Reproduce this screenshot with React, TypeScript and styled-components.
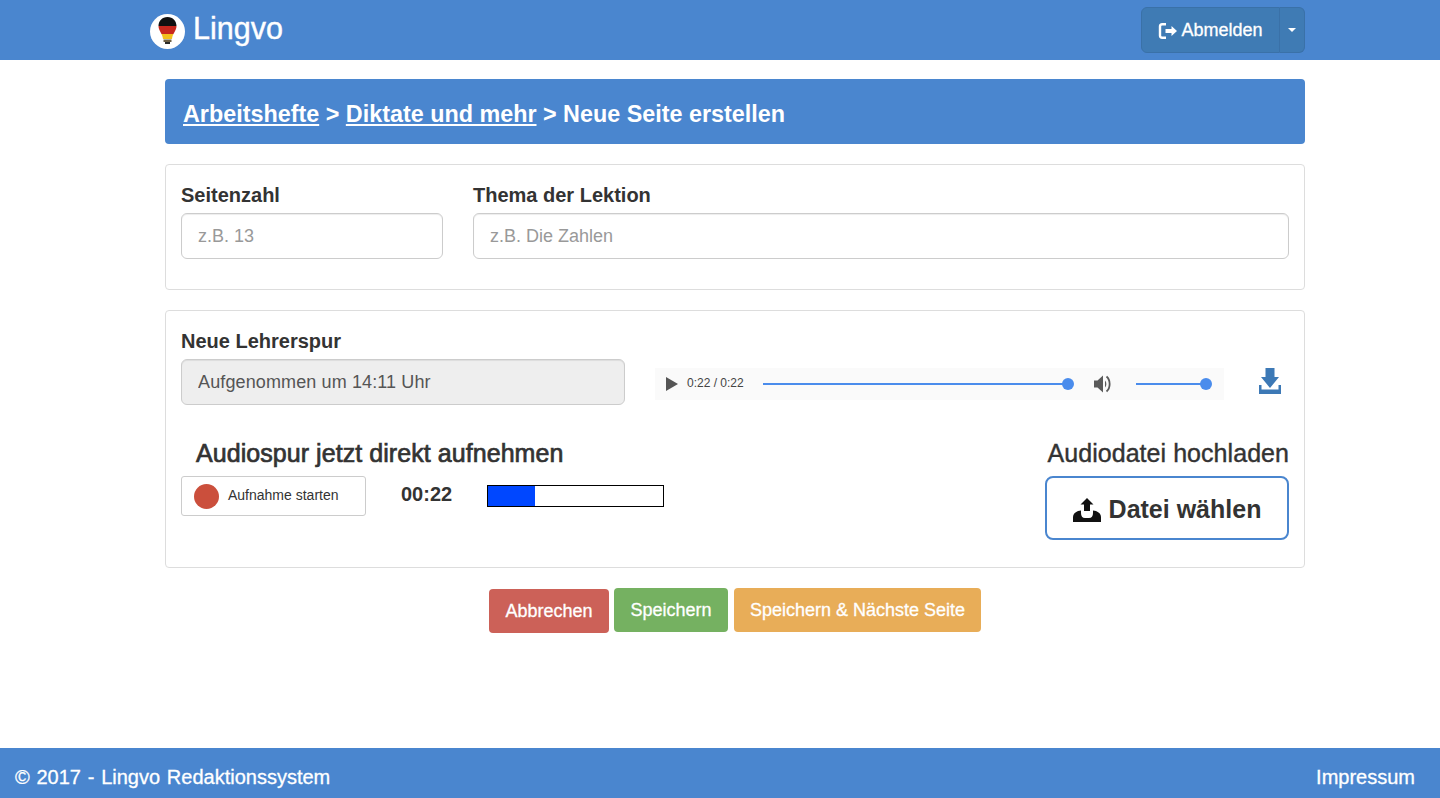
import styled, { createGlobalStyle } from "styled-components";

const BLUE = "#4a86cf";

const GlobalStyle = createGlobalStyle`
  * { box-sizing: border-box; }
  html, body { margin: 0; padding: 0; }
  body {
    font-family: "Liberation Sans", Arial, sans-serif;
    font-size: 18px;
    line-height: 1.42857;
    color: #333;
    background: #fff;
  }
`;

function SignOutIcon() {
  return (
    <svg width="20" height="18" viewBox="0 0 20 18" fill="#fff">
      <path d="M8 1H4.200C2 1 .8 2.300 .8 4.200v9.600C.8 15.700 2 17 4.200 17H8v-2.400H4.400c-.8 0-1.200-.5-1.200-1.200V4.600c0-.7.4-1.200 1.200-1.200H8z" />
      <path d="M13.500 4 19 9l-5.500 5v-3H7.500V7h6z" />
    </svg>
  );
}

function BulbLogo() {
  return (
    <svg width="35" height="35" viewBox="0 0 35 35">
      <defs>
        <linearGradient id="flag" x1="0" y1="0" x2="0" y2="1">
          <stop offset="0.41" stopColor="#111" />
          <stop offset="0.41" stopColor="#c8281e" />
          <stop offset="0.77" stopColor="#c8281e" />
          <stop offset="0.77" stopColor="#f2c01e" />
        </linearGradient>
      </defs>
      <circle cx="17.5" cy="17.5" r="17.5" fill="#fff" />
      <path
        d="M17.500 3C12 3 8.500 7 8.500 12c0 4.500 4 7.500 4.500 13h9c.5-5.500 4.500-8.500 4.500-13 0-5-3.500-9-9-9z"
        fill="url(#flag)"
      />
      <path d="M13.500 25.500h8V28h-8z" fill="#6d5f44" />
      <path d="M15 28h5v2h-5z" fill="#2a2a2a" />
    </svg>
  );
}

function DownloadIcon() {
  return (
    <svg width="24" height="26" viewBox="0 0 24 26" fill="#3d79b6">
      <path d="M7.500 0h9v9h4.500L12 20 3 9h4.500z" />
      <path d="M1 17h2.500v4.500h17V17H23v9H1z" />
    </svg>
  );
}

function UploadIcon() {
  return (
    <svg width="28" height="24" viewBox="0 0 28 24" fill="#111">
      <path d="M14 0l6.500 6.500H17V13h-6V6.500H7.500z" />
      <path d="M0 19q0-4 5-6l3-.5V15q0 5 4 5h4q4 0 4-5v-2.500l3 .5q5 2 5 6v5H0z" />
    </svg>
  );
}

function SpeakerIcon() {
  return (
    <svg width="20" height="20" viewBox="0 0 20 20" fill="#5a5a5a">
      <path d="M2 6.500h3.500L11 1.500v17l-5.500-5H2z" />
      <path d="M13 6.500c1.800 1.800 1.800 5.200 0 7z" />
      <path
        d="M14.500 2.500c4.200 3.500 4.200 11.500 0 15"
        fill="none"
        stroke="#5a5a5a"
        strokeWidth="1.800"
      />
    </svg>
  );
}

export default function App() {
  return (
    <Page>
      <GlobalStyle />
      <Navbar>
        <Brand>
          <BulbLogo />
          <BrandName>Lingvo</BrandName>
        </Brand>
        <SplitButton>
          <LogoutButton>
            <SignOutIcon />
            Abmelden
          </LogoutButton>
          <CaretButton>
            <Caret />
          </CaretButton>
        </SplitButton>
      </Navbar>

      <Main>
        <Breadcrumb>
          <CrumbLink href="#">Arbeitshefte</CrumbLink> &gt;{" "}
          <CrumbLink href="#">Diktate und mehr</CrumbLink> &gt; Neue Seite erstellen
        </Breadcrumb>

        <Panel>
          <MetaRow>
            <PageField>
              <FieldLabel>Seitenzahl</FieldLabel>
              <TextInput placeholder="z.B. 13" />
            </PageField>
            <TopicField>
              <FieldLabel>Thema der Lektion</FieldLabel>
              <TextInput placeholder="z.B. Die Zahlen" />
            </TopicField>
          </MetaRow>
        </Panel>

        <TrackPanel>
          <FieldLabel>Neue Lehrerspur</FieldLabel>
          <TrackRow>
            <TrackName value="Aufgenommen um 14:11 Uhr" disabled />
            <AudioPlayer>
              <PlayTriangle />
              <AudioTime>0:22 / 0:22</AudioTime>
              <SeekTrack />
              <SpeakerIcon />
              <VolumeTrack />
            </AudioPlayer>
            <DownloadLink href="#">
              <DownloadIcon />
            </DownloadLink>
          </TrackRow>

          <SourceRow>
            <RecordColumn>
              <RecordHeading>Audiospur jetzt direkt aufnehmen</RecordHeading>
              <RecordControls>
                <RecordButton>
                  <RecordDot />
                  Aufnahme starten
                </RecordButton>
                <Timer>00:22</Timer>
                <LevelBar>
                  <LevelFill style={{ width: `${(47 / 175) * 100}%` }} />
                </LevelBar>
              </RecordControls>
            </RecordColumn>
            <UploadColumn>
              <UploadHeading>Audiodatei hochladen</UploadHeading>
              <FileButton>
                <UploadIcon />
                Datei wählen
              </FileButton>
            </UploadColumn>
          </SourceRow>
        </TrackPanel>

        <Actions>
          <CancelButton>Abbrechen</CancelButton>
          <SaveButton>Speichern</SaveButton>
          <NextButton>Speichern &amp; Nächste Seite</NextButton>
        </Actions>
      </Main>

      <Footer>
        <FooterNote>© 2017 - Lingvo Redaktionssystem</FooterNote>
        <span>Impressum</span>
      </Footer>
    </Page>
  );
}

const Page = styled.div`
  min-height: 798px;
  display: flex;
  flex-direction: column;
`;

const Navbar = styled.header`
  height: 60px;
  background: ${BLUE};
  padding: 7px 135px 0 150px;
  display: flex;
  justify-content: space-between;
  align-items: flex-start;
`;

const Brand = styled.div`
  display: flex;
  align-items: center;
  gap: 8px;
  height: 46px;
  padding-top: 3px;
`;

const BrandName = styled.span`
  font-size: 30.5px;
  color: #fff;
  line-height: 1;
  margin-top: -7px;
  -webkit-text-stroke: 0.4px #fff;
`;

const SplitButton = styled.div`
  display: flex;
  height: 46px;
`;

const LogoutButton = styled.button`
  width: 139px;
  display: flex;
  align-items: center;
  justify-content: center;
  gap: 3px;
  background: #3f7bb4;
  color: #fff;
  font: inherit;
  font-size: 18px;
  border: 1px solid #3a71a8;
  border-radius: 6px 0 0 6px;
  padding: 2px 0 0;
  -webkit-text-stroke: 0.3px #fff;
`;

const CaretButton = styled.button`
  width: 25px;
  display: flex;
  align-items: center;
  justify-content: center;
  background: #3f7bb4;
  border: 1px solid #3a71a8;
  border-left: 0;
  border-radius: 0 6px 6px 0;
  padding: 0;
`;

const Caret = styled.span`
  width: 0;
  height: 0;
  border-left: 4px solid transparent;
  border-right: 4px solid transparent;
  border-top: 4px solid #fff;
`;

const Main = styled.main`
  width: 1140px;
  margin: 19px 0 0 165px;
  display: flex;
  flex-direction: column;
`;

const Breadcrumb = styled.div`
  height: 65px;
  background: ${BLUE};
  border-radius: 4px;
  color: #fff;
  font-size: 23.35px;
  font-weight: 700;
  line-height: 71px;
  padding-left: 18px;
`;

const CrumbLink = styled.a`
  color: #fff;
  text-decoration: underline;
`;

const Panel = styled.section`
  margin-top: 20px;
  height: 126px;
  border: 1px solid #ddd;
  border-radius: 4px;
  padding: 17px 15px 0;
`;

const MetaRow = styled.div`
  display: flex;
  gap: 30px;
`;

const PageField = styled.div`
  width: 262px;
`;

const TopicField = styled.div`
  flex: 1;
`;

const FieldLabel = styled.label`
  display: block;
  font-weight: 700;
  font-size: 20px;
  line-height: 26px;
  margin-bottom: 5px;
`;

const TextInput = styled.input`
  display: block;
  width: 100%;
  height: 46px;
  padding: 0 16px;
  font: inherit;
  font-size: 18px;
  color: #555;
  background: #fff;
  border: 1px solid #ccc;
  border-radius: 6px;
  outline: none;
  box-shadow: inset 0 1px 1px rgba(0, 0, 0, 0.075);
  &::placeholder {
    color: #999;
    opacity: 1;
  }
`;

const TrackPanel = styled(Panel)`
  height: 258px;
`;

const TrackRow = styled.div`
  display: flex;
  align-items: flex-start;
`;

const TrackName = styled(TextInput)`
  width: 444px;
  background: #eee;
  opacity: 1;
  letter-spacing: 0.12px;
`;

const AudioPlayer = styled.div`
  width: 569px;
  height: 32px;
  margin: 9px 0 0 30px;
  background: #fafafa;
  display: flex;
  align-items: center;
  padding: 0 18px 0 11px;
`;

const PlayTriangle = styled.span`
  width: 0;
  height: 0;
  border-top: 7px solid transparent;
  border-bottom: 7px solid transparent;
  border-left: 12px solid #555;
`;

const AudioTime = styled.span`
  font-size: 12px;
  color: #444;
  margin-left: 9px;
  width: 58px;
  white-space: nowrap;
`;

const Track = styled.span`
  position: relative;
  height: 2px;
  background: #4a8cec;
  &::after {
    content: "";
    position: absolute;
    right: -6px;
    top: -5px;
    width: 12px;
    height: 12px;
    border-radius: 50%;
    background: #4a8cec;
  }
`;

const SeekTrack = styled(Track)`
  flex: 1;
  margin: 0 24px 0 18px;
`;

const VolumeTrack = styled(Track)`
  width: 70px;
  margin-left: 24px;
`;

const DownloadLink = styled.a`
  display: block;
  height: 26px;
  margin: 9px 0 0 34px;
`;

const SourceRow = styled.div`
  display: flex;
  justify-content: space-between;
  margin-top: 31px;
`;

const RecordColumn = styled.div``;

const RecordHeading = styled.h3`
  margin: 0 0 6px 15px;
  font-size: 25px;
  font-weight: 400;
  line-height: 34px;
  letter-spacing: 0.06px;
  -webkit-text-stroke: 0.7px #333;
`;

const RecordControls = styled.div`
  display: flex;
  align-items: center;
`;

const RecordButton = styled.button`
  width: 185px;
  height: 40px;
  display: flex;
  align-items: center;
  gap: 9px;
  padding: 0 12px;
  font: inherit;
  font-size: 14px;
  color: #333;
  background: #fff;
  border: 1px solid #ccc;
  border-radius: 3px;
`;

const RecordDot = styled.span`
  width: 25px;
  height: 25px;
  border-radius: 50%;
  background: #cb4f3c;
`;

const Timer = styled.span`
  font-size: 20px;
  font-weight: 700;
  margin: -4px 35px 0;
`;

const LevelBar = styled.div`
  width: 177px;
  height: 22px;
  border: 1px solid #000;
  background: #fff;
`;

const LevelFill = styled.div`
  height: 100%;
  background: #0047ff;
`;

const UploadColumn = styled.div`
  display: flex;
  flex-direction: column;
  align-items: flex-end;
`;

const UploadHeading = styled.h3`
  margin: 0 0 6px;
  font-size: 25px;
  font-weight: 400;
  line-height: 34px;
  letter-spacing: 0.05px;
  -webkit-text-stroke: 0.4px #333;
`;

const FileButton = styled.button`
  width: 244px;
  height: 64px;
  display: flex;
  align-items: center;
  justify-content: center;
  gap: 8px;
  font: inherit;
  font-size: 25px;
  font-weight: 700;
  color: #333;
  background: #fff;
  border: 2px solid ${BLUE};
  border-radius: 8px;
  padding: 3px 0 0;
`;

const Actions = styled.div`
  display: flex;
  justify-content: center;
  gap: 5px;
  margin-top: 20px;
`;

const ActionButton = styled.button<{ $bg: string }>`
  height: 44px;
  padding: 2px 0 0;
  font: inherit;
  font-size: 18px;
  color: #fff;
  background: ${(p) => p.$bg};
  border: 0;
  border-radius: 4px;
  -webkit-text-stroke: 0.3px #fff;
`;

const CancelButton = styled(ActionButton).attrs({ $bg: "#cc6158" })`
  margin-top: 1px;
  width: 120px;
`;

const SaveButton = styled(ActionButton).attrs({ $bg: "#75b161" })`
  width: 114px;
  margin-right: 1px;
`;

const NextButton = styled(ActionButton).attrs({ $bg: "#e8ad58" })`
  width: 247px;
`;

const Footer = styled.footer`
  margin-top: auto;
  height: 50px;
  background: ${BLUE};
  color: #fff;
  font-size: 20px;
  padding: 8px 25px 0 15px;
  display: flex;
  align-items: center;
  justify-content: space-between;
  -webkit-text-stroke: 0.3px #fff;
`;

const FooterNote = styled.span`
  word-spacing: 1.2px;
`;
